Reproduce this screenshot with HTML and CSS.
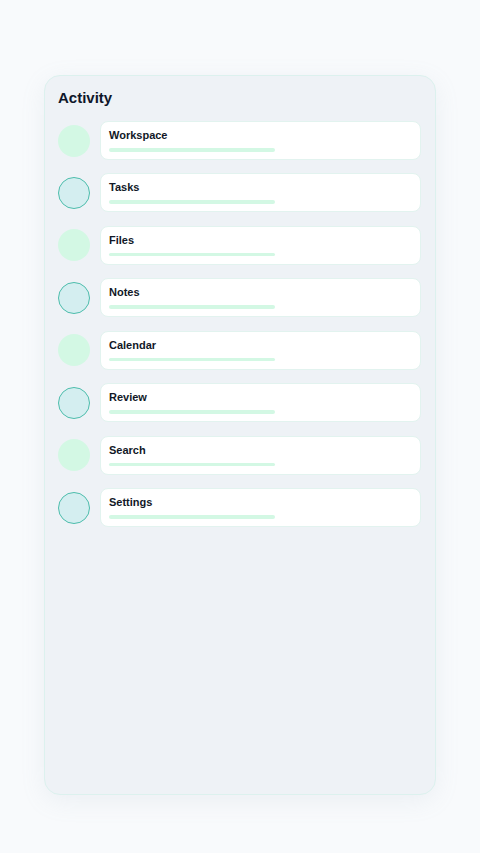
FILE: index.html
```html
<!DOCTYPE html>
<html lang="en">
<head>
<meta charset="utf-8">
<title>Activity</title>
<link rel="stylesheet" href="styles.css">
</head>
<body>
<main class="panel">
  <h1 class="title">Activity</h1>
  <ul class="list">
    <li class="row"><span class="dot dot-a"></span><div class="card"><span class="label">Workspace</span><span class="bar"></span></div></li>
    <li class="row"><span class="dot dot-b"></span><div class="card"><span class="label">Tasks</span><span class="bar"></span></div></li>
    <li class="row"><span class="dot dot-a"></span><div class="card"><span class="label">Files</span><span class="bar"></span></div></li>
    <li class="row"><span class="dot dot-b"></span><div class="card"><span class="label">Notes</span><span class="bar"></span></div></li>
    <li class="row"><span class="dot dot-a"></span><div class="card"><span class="label">Calendar</span><span class="bar"></span></div></li>
    <li class="row"><span class="dot dot-b"></span><div class="card"><span class="label">Review</span><span class="bar"></span></div></li>
    <li class="row"><span class="dot dot-a"></span><div class="card"><span class="label">Search</span><span class="bar"></span></div></li>
    <li class="row"><span class="dot dot-b"></span><div class="card"><span class="label">Settings</span><span class="bar"></span></div></li>
  </ul>
</main>
</body>
</html>
```
FILE: styles.css
```css
* { box-sizing: border-box; }
html, body { margin: 0; padding: 0; }
body {
  background: #f8fafc;
  font-family: "Liberation Sans", Arial, sans-serif;
  color: #0f172a;
  padding: 75px 44px 0 44px;
  min-height: 853px;
}
.panel {
  width: 392px;
  height: 720px;
  background: #eef2f6;
  border: 1px solid #dcf1ee;
  border-radius: 16px;
  padding: 12px 14px 14px 13px;
  box-shadow: 0 6px 24px rgba(148, 163, 184, 0.12);
}
.title {
  margin: 0 0 13px 0;
  font-size: 15px;
  line-height: 20px;
  font-weight: 700;
  color: #0f172a;
}
.list {
  list-style: none;
  margin: 0;
  padding: 0;
  display: flex;
  flex-direction: column;
  gap: 13.45px;
}
.row {
  display: flex;
  align-items: center;
  gap: 10px;
}
.dot {
  flex: 0 0 32px;
  width: 32px;
  height: 32px;
  border-radius: 50%;
}
.dot-a { background: #d3f8e4; }
.dot-b { background: #d4eef0; border: 1px solid #4dbdac; }
.card {
  flex: 1;
  height: 39px;
  background: #ffffff;
  border: 1px solid #e2f3ef;
  border-radius: 8px;
  padding: 6px 8px 0 8px;
  display: flex;
  flex-direction: column;
}
.label {
  font-size: 11px;
  line-height: 15px;
  font-weight: 700;
  color: #111827;
}
.bar {
  display: block;
  margin-top: 5px;
  width: 166px;
  height: 3.5px;
  border-radius: 2px;
  background: #d3f8e4;
}
```
